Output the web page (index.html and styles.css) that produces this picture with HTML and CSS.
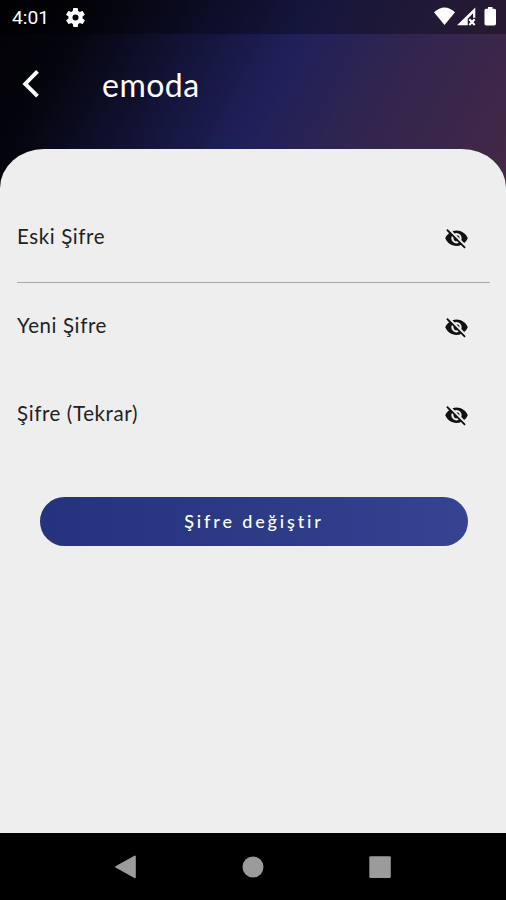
FILE: index.html
```html
<!DOCTYPE html>
<html lang="tr">
<head>
<meta charset="utf-8">
<title>emoda</title>
<link rel="stylesheet" href="styles.css">
</head>
<body>
<div class="screen">
  <header class="top">
    <div class="status">
      <span class="clock">4:01</span>
      <svg class="gear" viewBox="2 2 20 20"><path fill="#fff" fill-rule="evenodd" d="M19.4 13a7.8 7.8 0 0 0 0-2l2.1-1.6a.5.5 0 0 0 .1-.7l-2-3.4a.5.5 0 0 0-.6-.2l-2.5 1a7 7 0 0 0-1.7-1l-.4-2.6a.5.5 0 0 0-.5-.5h-4a.5.5 0 0 0-.4.5l-.4 2.6a7 7 0 0 0-1.7 1l-2.5-1a.5.5 0 0 0-.6.2l-2 3.4a.5.5 0 0 0 .1.7L4.6 11a7.8 7.8 0 0 0 0 2l-2.1 1.6a.5.5 0 0 0-.1.7l2 3.4c.1.2.4.3.6.2l2.5-1a7 7 0 0 0 1.7 1l.4 2.6c0 .3.2.5.4.5h4c.3 0 .5-.2.5-.5l.4-2.6a7 7 0 0 0 1.700-1l2.500 1c.2.1.5 0 .6-.2l2-3.400a.5.5 0 0 0-.1-.7zM12 15.200a3.200 3.200 0 1 1 0-6.400 3.200 3.200 0 0 1 0 6.400z"/></svg>
      <svg class="signals" viewBox="0 0 66 22"><g fill="#fff"><path d="M1 6.2Q11.5-3.4 22 6.2L11.5 19z"/><path d="M24 19.3 42.3 1.5v10.2h-2.2V7.3l-5.4 5.4v6.6z"/><path d="M51.5 4.2q0-1.500 1.500-1.500h2V1h4.500v1.700h2q1.500 0 1.500 1.500v13.500q0 1.800-1.800 1.800h-8q-1.700 0-1.700-1.800z"/></g><path d="m36.300 13.200 5.400 5.800m0-5.800-5.400 5.800" stroke="#fff" stroke-width="2"/></svg>
    </div>
    <div class="appbar">
      <svg class="back" viewBox="0 0 18 30"><path d="M15.500 2.400 3.200 15l12.300 12.200" fill="none" stroke="#fff" stroke-width="3.900"/></svg>
      <h1>emoda</h1>
    </div>
  </header>
  <main class="sheet">
    <div class="field lined"><span class="label">Eski Şifre</span><svg class="eye" viewBox="1 2 22 20.5"><path d="M12 7a5 5 0 0 1 5 5c0 .65-.13 1.26-.36 1.83l2.92 2.92A11.8 11.8 0 0 0 23 12C21.270 7.610 17 4.500 12 4.500c-1.400 0-2.740.25-3.980.7l2.160 2.160A5 5 0 0 1 12 7zM2 4.270l2.280 2.280.46.46A11.800 11.800 0 0 0 1 12c1.730 4.390 6 7.500 11 7.500 1.550 0 3.030-.3 4.380-.84l.42.42L19.730 22 21 20.730 3.270 3zM7.530 9.800l1.550 1.550A3 3 0 0 0 12.650 14.920l1.550 1.550A5 5 0 0 1 7.530 9.800zm4.310-.78 3.150 3.150.02-.16a3 3 0 0 0-3-3z"/></svg></div>
    <div class="field"><span class="label">Yeni Şifre</span><svg class="eye" viewBox="1 2 22 20.5"><path d="M12 7a5 5 0 0 1 5 5c0 .65-.13 1.26-.36 1.83l2.92 2.92A11.8 11.8 0 0 0 23 12C21.270 7.610 17 4.500 12 4.500c-1.400 0-2.740.25-3.980.7l2.160 2.160A5 5 0 0 1 12 7zM2 4.270l2.280 2.280.46.46A11.800 11.800 0 0 0 1 12c1.730 4.390 6 7.500 11 7.500 1.550 0 3.030-.3 4.380-.84l.42.42L19.730 22 21 20.730 3.270 3zM7.530 9.800l1.550 1.550A3 3 0 0 0 12.650 14.920l1.550 1.550A5 5 0 0 1 7.530 9.800zm4.310-.78 3.150 3.150.02-.16a3 3 0 0 0-3-3z"/></svg></div>
    <div class="field"><span class="label">Şifre (Tekrar)</span><svg class="eye" viewBox="1 2 22 20.5"><path d="M12 7a5 5 0 0 1 5 5c0 .65-.13 1.26-.36 1.83l2.92 2.92A11.8 11.8 0 0 0 23 12C21.270 7.610 17 4.500 12 4.500c-1.400 0-2.740.25-3.980.7l2.160 2.160A5 5 0 0 1 12 7zM2 4.270l2.280 2.280.46.46A11.800 11.800 0 0 0 1 12c1.730 4.390 6 7.500 11 7.500 1.550 0 3.030-.3 4.380-.84l.42.42L19.730 22 21 20.730 3.270 3zM7.530 9.800l1.550 1.550A3 3 0 0 0 12.650 14.920l1.550 1.550A5 5 0 0 1 7.530 9.800zm4.310-.78 3.150 3.150.02-.16a3 3 0 0 0-3-3z"/></svg></div>
    <button class="submit">Şifre değiştir</button>
  </main>
  <nav class="nav">
    <svg viewBox="0 0 24 24"><path fill="#9b9b9b" d="M1.500 11.200 20.800.5q1 0 1 1v20.800q0 1-1 1L1.500 12.500q-.8-.6 0-1.300z"/></svg>
    <svg viewBox="0 0 24 24"><circle cx="12" cy="12" r="10.500" fill="#9b9b9b"/></svg>
    <svg viewBox="0 0 24 24"><rect x="1.300" y="1.200" width="21.500" height="21.800" rx="1.200" fill="#9b9b9b"/></svg>
  </nav>
</div>
</body>
</html>
```
FILE: styles.css
```css
* { box-sizing: border-box; }
body { margin: 0; }
.screen {
  width: 506px;
  height: 900px;
  display: flex;
  flex-direction: column;
  overflow: hidden;
  background: linear-gradient(118deg, #020206 0%, #04040c 14%, #1f205a 52%, #30254f 70%, #452845 100%) 0 0 / 506px 190px no-repeat;
  font-family: Lato, "Open Sans", sans-serif;
}
.top { height: 149px; flex: none; }
.status {
  height: 34px;
  display: flex;
  align-items: center;
  padding: 0 7px 0 12px;
  background: rgba(0, 0, 0, 0.32);
}
.clock {
  width: 54px;
  color: #fff;
  font: 19.200px/34px Roboto, sans-serif;
  padding-top: 2px;
}
.gear { width: 19px; height: 19px; }
.signals { width: 66px; height: 22px; margin-left: auto; }
.appbar { display: flex; align-items: center; height: 100px; padding-left: 22px; }
.back { width: 18px; height: 30px; }
h1 {
  margin: 1px 0 0 62px;
  color: #fff;
  font-size: 32px;
  font-weight: 400;
  line-height: 40px;
  letter-spacing: 0.500px;
}
.sheet {
  flex: 1;
  display: flex;
  flex-direction: column;
  padding: 45px 16px 0 17px;
  background: #eee;
  border-radius: 44px 44px 0 0 / 39px 39px 0 0;
}
.field {
  height: 88.500px;
  flex: none;
  display: flex;
  align-items: center;
  justify-content: space-between;
  padding: 0 22px 0 0;
  border-bottom: 1px solid transparent;
}
.lined { border-color: #aaa; }
.label { font-size: 20.500px; line-height: 28px; color: #222; margin-top: -3px; letter-spacing: 0.600px; }
.eye { width: 23px; height: 21px; fill: #111; margin-top: 1.500px; }
.submit {
  width: 428px;
  height: 49px;
  flex: none;
  margin: 37px 0 0 23px;
  border: 0;
  border-radius: 25px;
  background: linear-gradient(90deg, #25327d, #354390);
  color: #fff;
  font: 500 18px/24px Lato, sans-serif;
  letter-spacing: 2.850px;
}
.nav {
  height: 67px;
  flex: none;
  display: flex;
  gap: 103px;
  padding: 21.500px 0 0 114.300px;
  background: #000;
}
.nav svg { width: 24px; height: 24px; }
```
